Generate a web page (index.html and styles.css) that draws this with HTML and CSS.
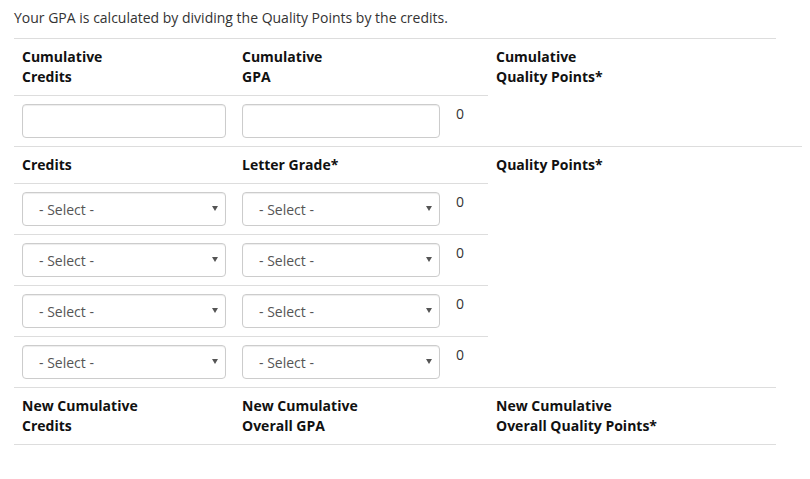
FILE: index.html
```html
<!DOCTYPE html>
<html>
<head>
<meta charset="utf-8">
<link rel="stylesheet" href="styles.css">
</head>
<body>
<div class="page">
  <p class="intro">Your GPA is calculated by dividing the Quality Points by the credits.</p>
  <div class="calc">
    <div class="cell head">Cumulative<br>Credits</div>
    <div class="cell head">Cumulative<br>GPA</div>
    <div class="cell"></div>
    <div class="cell head span2">Cumulative<br>Quality Points*</div>

    <div class="cell"><input class="field" type="text"></div>
    <div class="cell"><input class="field" type="text"></div>
    <div class="cell num">0</div>

    <div class="cell head">Credits</div>
    <div class="cell head">Letter Grade*</div>
    <div class="cell"></div>
    <div class="cell head span5 wide">Quality Points*</div>

    <div class="cell"><div class="sel"><select class="field"><option>- Select -</option></select><svg class="arrow" width="6" height="5" viewBox="0 0 6 5"><path d="M0 0H6L3 5Z" fill="#555"/></svg></div></div>
    <div class="cell"><div class="sel"><select class="field"><option>- Select -</option></select><svg class="arrow" width="6" height="5" viewBox="0 0 6 5"><path d="M0 0H6L3 5Z" fill="#555"/></svg></div></div>
    <div class="cell num">0</div>

    <div class="cell"><div class="sel"><select class="field"><option>- Select -</option></select><svg class="arrow" width="6" height="5" viewBox="0 0 6 5"><path d="M0 0H6L3 5Z" fill="#555"/></svg></div></div>
    <div class="cell"><div class="sel"><select class="field"><option>- Select -</option></select><svg class="arrow" width="6" height="5" viewBox="0 0 6 5"><path d="M0 0H6L3 5Z" fill="#555"/></svg></div></div>
    <div class="cell num">0</div>

    <div class="cell"><div class="sel"><select class="field"><option>- Select -</option></select><svg class="arrow" width="6" height="5" viewBox="0 0 6 5"><path d="M0 0H6L3 5Z" fill="#555"/></svg></div></div>
    <div class="cell"><div class="sel"><select class="field"><option>- Select -</option></select><svg class="arrow" width="6" height="5" viewBox="0 0 6 5"><path d="M0 0H6L3 5Z" fill="#555"/></svg></div></div>
    <div class="cell num">0</div>

    <div class="cell"><div class="sel"><select class="field"><option>- Select -</option></select><svg class="arrow" width="6" height="5" viewBox="0 0 6 5"><path d="M0 0H6L3 5Z" fill="#555"/></svg></div></div>
    <div class="cell"><div class="sel"><select class="field"><option>- Select -</option></select><svg class="arrow" width="6" height="5" viewBox="0 0 6 5"><path d="M0 0H6L3 5Z" fill="#555"/></svg></div></div>
    <div class="cell num">0</div>

    <div class="cell head last">New Cumulative<br>Credits</div>
    <div class="cell head last">New Cumulative<br>Overall GPA</div>
    <div class="cell last"></div>
    <div class="cell head last">New Cumulative<br>Overall Quality Points*</div>
  </div>
</div>
</body>
</html>
```

FILE: styles.css
```css
* { box-sizing: border-box; }
body {
  margin: 0;
  background: #fff;
  font-family: "Open Sans", "Liberation Sans", sans-serif;
  font-size: 14px;
  line-height: 20px;
  color: #333;
}
.page { padding: 8px 14px; }
.intro { margin: 0 0 10px; }
.calc {
  display: grid;
  grid-template-columns: 220px 214px 40px 288px;
  width: 762px;
}
.cell {
  border-top: 1px solid #ddd;
  padding: 8px;
  min-width: 0;
}
.last { border-bottom: 1px solid #ddd; }
.head { font-weight: 700; color: #111; }
.span2 { grid-row: span 2; }
.span5 { grid-row: span 5; }
.wide { margin-right: -26px; }
.num { color: #333; }
.field {
  display: block;
  width: 100%;
  height: 34px;
  border: 1px solid #ccc;
  border-radius: 4px;
  background: #fff;
  box-shadow: inset 0 1px 1px rgba(0,0,0,0.075);
  font-family: inherit;
  font-size: 14px;
  color: #555;
  padding: 6px 12px;
  margin: 0;
}
.sel { position: relative; }
select.field {
  -webkit-appearance: none;
  appearance: none;
  padding: 6px 24px 6px 16px;
}
.arrow {
  position: absolute;
  right: 8px;
  top: 14px;
  pointer-events: none;
}
```
